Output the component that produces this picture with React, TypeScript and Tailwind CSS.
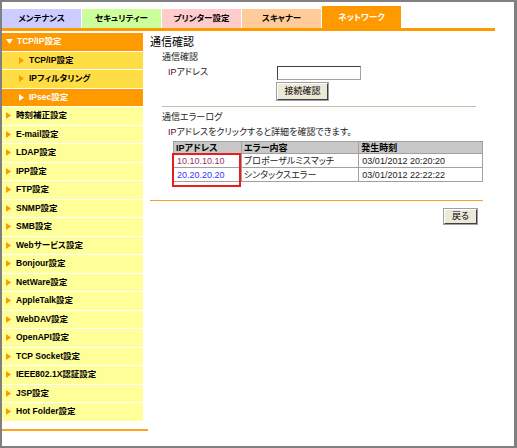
import React from "react";

const font = "[font-family:'Liberation_Sans','Noto_Sans_CJK_JP',sans-serif] [font-feature-settings:'palt']";

const tabs = [
  { label: "メンテナンス", cls: "bg-[#ccccff] text-black h-[19px]" },
  { label: "セキュリティー", cls: "bg-[#ccff99] text-black h-[19px]" },
  { label: "プリンター設定", cls: "bg-[#ffcccc] text-black h-[19px]" },
  { label: "スキャナー", cls: "bg-[#ffcc99] text-black h-[19px]" },
  { label: "ネットワーク", cls: "bg-[#ff9900] text-white h-[22px]" },
];

type Item = { label: string; kind: "head" | "sub" | "subActive" | "top" };

const menu: Item[] = [
  { label: "TCP/IP設定", kind: "head" },
  { label: "TCP/IP設定", kind: "sub" },
  { label: "IPフィルタリング", kind: "sub" },
  { label: "IPsec設定", kind: "subActive" },
  { label: "時刻補正設定", kind: "top" },
  { label: "E-mail設定", kind: "top" },
  { label: "LDAP設定", kind: "top" },
  { label: "IPP設定", kind: "top" },
  { label: "FTP設定", kind: "top" },
  { label: "SNMP設定", kind: "top" },
  { label: "SMB設定", kind: "top" },
  { label: "Webサービス設定", kind: "top" },
  { label: "Bonjour設定", kind: "top" },
  { label: "NetWare設定", kind: "top" },
  { label: "AppleTalk設定", kind: "top" },
  { label: "WebDAV設定", kind: "top" },
  { label: "OpenAPI設定", kind: "top" },
  { label: "TCP Socket設定", kind: "top" },
  { label: "IEEE802.1X認証設定", kind: "top" },
  { label: "JSP設定", kind: "top" },
  { label: "Hot Folder設定", kind: "top" },
];

function Arrow({ color }: { color: string }) {
  return (
    <svg width="5" height="7" viewBox="0 0 5 7" className="shrink-0">
      <polygon points="0,0 5,3.5 0,7" fill={color} />
    </svg>
  );
}

function MenuRow({ item }: { item: Item }) {
  if (item.kind === "head") {
    return (
      <div className="h-[18.5px] border-b border-white bg-[#ff9900] flex items-center pl-[4px] gap-[4px] text-white font-bold text-[8.5px]">
        <svg width="7" height="5" viewBox="0 0 7 5" className="shrink-0">
          <polygon points="0,0 7,0 3.5,5" fill="#ffffff" />
        </svg>
        <span>{item.label}</span>
      </div>
    );
  }
  if (item.kind === "sub" || item.kind === "subActive") {
    const active = item.kind === "subActive";
    return (
      <div
        className={
          "h-[18.5px] border-b border-white flex items-center pl-[17px] gap-[5px] font-bold text-[8.5px] " +
          (active ? "bg-[#ff9900] text-white" : "bg-[#ffdd44] text-black")
        }
      >
        <Arrow color={active ? "#ffffff" : "#ff9900"} />
        <span>{item.label}</span>
      </div>
    );
  }
  return (
    <div className="h-[18.5px] border-b border-white bg-[#ffff99] flex items-center pl-[4px] gap-[5px] font-bold text-[8.5px] text-black">
      <Arrow color="#ff9900" />
      <span>{item.label}</span>
    </div>
  );
}

function Btn({ label, cls }: { label: string; cls: string }) {
  return (
    <button
      className={
        "bg-[#ece9d8] border border-t-[#ffffff] border-l-[#ffffff] border-b-[#404040] border-r-[#404040] outline outline-1 outline-[#a0a0a0] text-[9px] text-black flex items-center justify-center leading-none " +
        cls
      }
    >
      {label}
    </button>
  );
}

export default function App() {
  return (
    <div className={"w-[517px] h-[448px] bg-white border-[#808080] border-t-2 border-l-2 border-b-2 border-r-[3px] overflow-hidden " + font}>
      <div className="flex items-end gap-[1px] mt-[4px] h-[22px]">
        {tabs.map((t) => (
          <div key={t.label} className={"w-[79px] flex items-center justify-center font-bold text-[8.5px] " + t.cls}>
            {t.label}
          </div>
        ))}
      </div>
      <div className="w-[493px] h-[3px] bg-[#ff9900]" />

      <div className="flex mt-[2px]">
        <div className="w-[146px] shrink-0">
          <div className="w-[141px]">
            {menu.map((m, i) => (
              <MenuRow key={i} item={m} />
            ))}
          </div>
          <div className="mt-[7px] h-[2px] bg-[#ffa31a]" />
        </div>

        <div className="ml-[2px] flex-1 text-[#222] text-[9px]">
          <div className="mt-[1px] leading-[16px] text-[11px] text-black">通信確認</div>
          <div className="pl-[12px] leading-[15px]">通信確認</div>
          <div className="mt-[1px] flex items-center h-[14px]">
            <div className="pl-[18px] w-[127px]">
              <span className="text-[#660033]">IP</span>アドレス
            </div>
            <div className="w-[84px] h-[14px] bg-white border border-t-[#404040] border-l-[#404040] border-b-[#a0a0a0] border-r-[#a0a0a0]" />
          </div>
          <Btn label="接続確認" cls="mt-[3px] ml-[127px] w-[51px] h-[17px]" />
          <div className="mt-[6px] ml-[12px] w-[314px] h-[1px] bg-[#c4c0a8]" />
          <div className="mt-[3px] pl-[12px] leading-[15px]">通信エラーログ</div>
          <div className="pl-[18px] leading-[15px]">
            <span className="text-[#660033]">IP</span>アドレスをクリックすると詳細を確認できます。
          </div>
          <div className="relative mt-[1px] ml-[23px] w-[310px]">
            <table className="border-collapse w-[310px] text-[9px]">
              <thead>
                <tr className="h-[12px] bg-[#c8c8c8]">
                  <th className="w-[68px] border border-[#a0a0a0] text-left font-bold pl-[2px] leading-[10px] text-black">IPアドレス</th>
                  <th className="w-[118px] border border-[#a0a0a0] text-left font-bold pl-[2px] leading-[10px] text-black">エラー内容</th>
                  <th className="w-[124px] border border-[#a0a0a0] text-left font-bold pl-[2px] leading-[10px] text-black">発生時刻</th>
                </tr>
              </thead>
              <tbody>
                <tr className="h-[14px]">
                  <td className="border border-[#a0a0a0] pl-[3px] leading-[12px] text-[#993366]">10.10.10.10</td>
                  <td className="border border-[#a0a0a0] pl-[2px] leading-[12px]">プロポーザルミスマッチ</td>
                  <td className="border border-[#a0a0a0] pl-[3px] leading-[12px]">03/01/2012 20:20:20</td>
                </tr>
                <tr className="h-[14px]">
                  <td className="border border-[#a0a0a0] pl-[3px] leading-[12px] text-[#3333ff]">20.20.20.20</td>
                  <td className="border border-[#a0a0a0] pl-[2px] leading-[12px]">シンタックスエラー</td>
                  <td className="border border-[#a0a0a0] pl-[3px] leading-[12px]">03/01/2012 22:22:22</td>
                </tr>
              </tbody>
            </table>
            <div className="absolute left-[-1px] top-[12px] w-[69px] h-[34px] border-2 border-[#e61e1e]" />
          </div>
          <div className="mt-[18px] w-[333px] h-[1px] bg-[#ff9933]" />
          <Btn label="戻る" cls="mt-[8px] ml-[294px] w-[33px] h-[15px]" />
        </div>
      </div>
    </div>
  );
}
